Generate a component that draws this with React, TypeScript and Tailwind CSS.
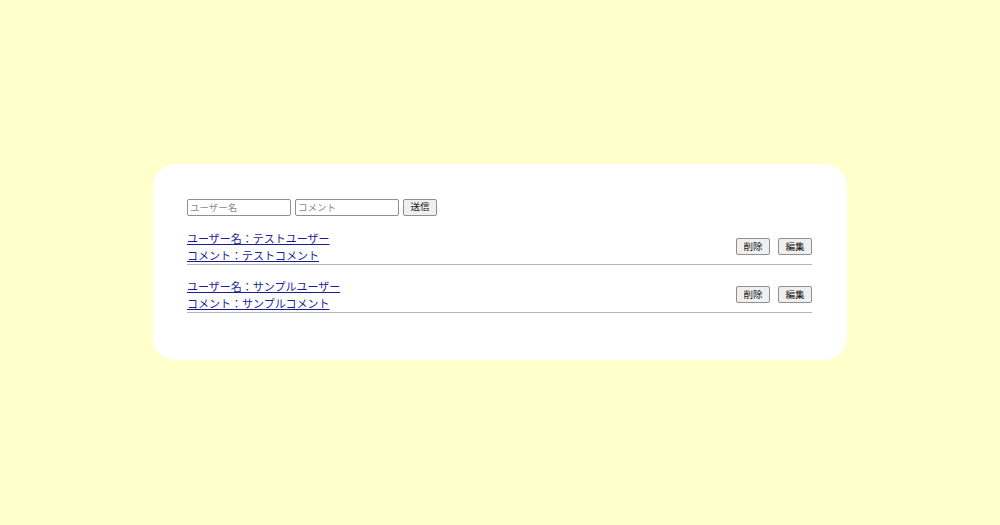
import React from 'react';

interface Post {
  name: string;
  comment: string;
}

const posts: Post[] = [
  { name: 'テストユーザー', comment: 'テストコメント' },
  { name: 'サンプルユーザー', comment: 'サンプルコメント' },
];

const font = "font-['Noto_Sans_CJK_JP','Liberation_Sans',sans-serif]";
const btn = 'w-[34px] h-[17px] border border-[#8f8f8f] rounded-[2px] bg-[#efefef] text-[9.5px] text-[#111] leading-none';
const field = 'w-[104px] h-[17px] border border-[#8f8f8f] rounded-[2px] px-[2px] text-[9.5px] placeholder:text-[#8a8a8a] outline-none';

export default function App() {
  return (
    <div className={`w-full h-[525px] bg-[#ffffcc] flex items-center justify-center ${font}`}>
      <div className="w-[694px] -mt-[2px] bg-white rounded-[22px] pt-[35px] pb-[47px] pl-[34px] pr-[35px]">
        <form className="flex items-center gap-[4px]" onSubmit={(e) => e.preventDefault()}>
          <input placeholder="ユーザー名" className={field} />
          <input placeholder="コメント" className={field} />
          <button className={btn}>送信</button>
        </form>
        <ul className="mt-[14px] flex flex-col gap-[13px]">
          {posts.map((p) => (
            <li key={p.name} className="flex items-center justify-between border-b border-[#b5b5b5]">
              <div className="flex flex-col text-[11px] leading-[17px]">
                <a href="#" className="text-[#1c1c96] underline self-start">ユーザー名：{p.name}</a>
                <a href="#" className="text-[#1c1c96] underline self-start">コメント：{p.comment}</a>
              </div>
              <div className="flex gap-[8px]">
                <button className={btn}>削除</button>
                <button className={btn}>編集</button>
              </div>
            </li>
          ))}
        </ul>
      </div>
    </div>
  );
}
